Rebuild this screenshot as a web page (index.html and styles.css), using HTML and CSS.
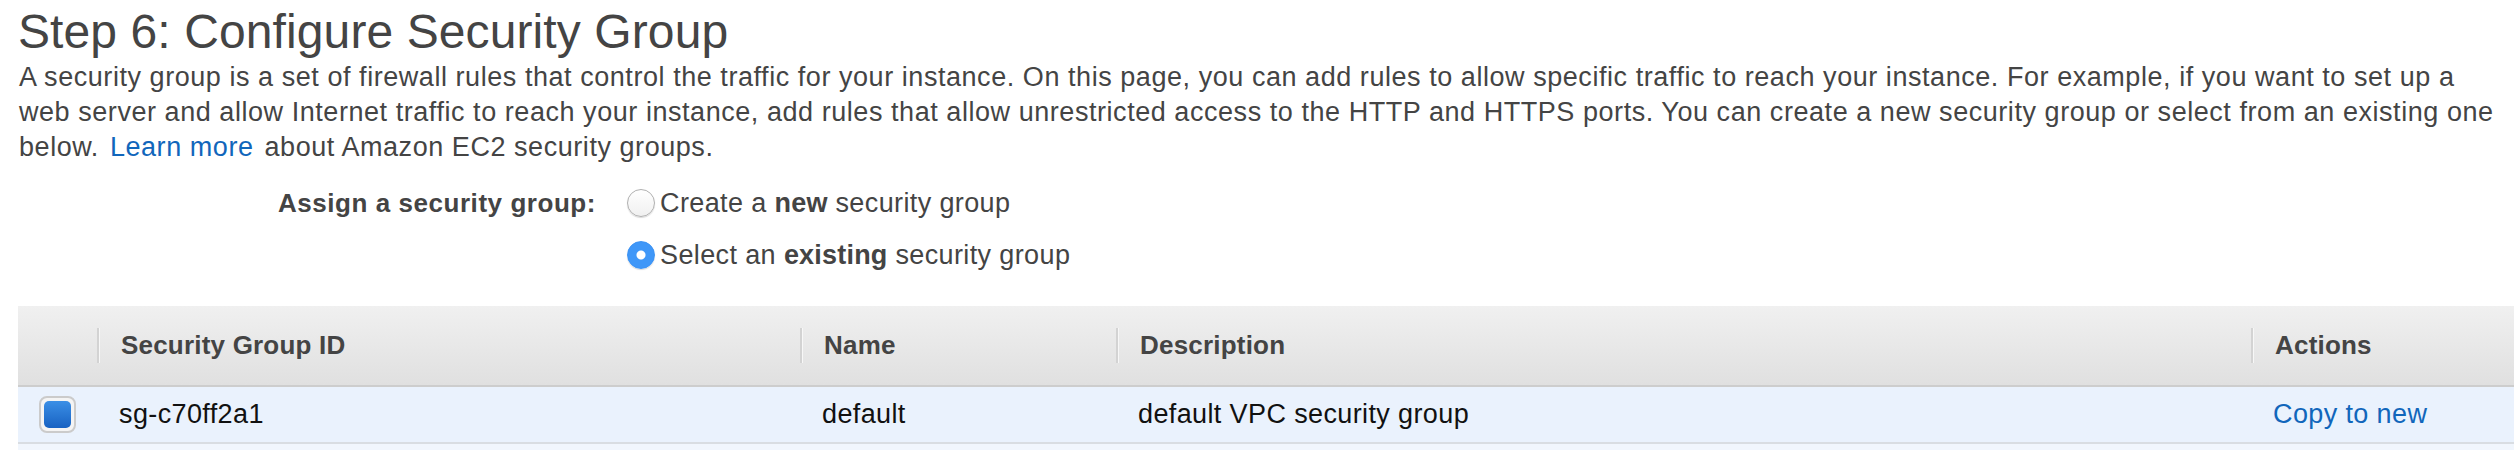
FILE: index.html
```html
<!DOCTYPE html>
<html>
<head>
<meta charset="utf-8">
<link rel="stylesheet" href="styles.css">
</head>
<body>
<div class="page">
  <h1 class="title">Step 6: Configure Security Group</h1>
  <p class="intro">A security group is a set of firewall rules that control the traffic for your instance. On this page, you can add rules to allow specific traffic to reach your instance. For example, if you want to set up a<br>web server and allow Internet traffic to reach your instance, add rules that allow unrestricted access to the HTTP and HTTPS ports. You can create a new security group or select from an existing one<br>below. <a class="link" href="#">Learn more</a> about Amazon EC2 security groups.</p>

  <div class="assign">
    <div class="assign-label">Assign a security group:</div>
    <div class="options">
      <label class="option"><span class="radio"></span><span>Create a <b>new</b> security group</span></label>
      <label class="option"><span class="radio checked"></span><span>Select an <b>existing</b> security group</span></label>
    </div>
  </div>

  <div class="table">
    <div class="thead">
      <div class="cell c1"></div>
      <div class="cell c2"><span class="sep"></span>Security Group ID</div>
      <div class="cell c3"><span class="sep"></span>Name</div>
      <div class="cell c4"><span class="sep"></span>Description</div>
      <div class="cell c5"><span class="sep"></span>Actions</div>
    </div>
    <div class="trow">
      <div class="cell c1"><span class="check"><span class="check-inner"></span></span></div>
      <div class="cell c2">sg-c70ff2a1</div>
      <div class="cell c3">default</div>
      <div class="cell c4">default VPC security group</div>
      <div class="cell c5"><a class="link" href="#">Copy to new</a></div>
    </div>
    <div class="trow-next"></div>
  </div>
</div>
</body>
</html>
```

FILE: styles.css
```css
html, body {
  margin: 0;
  padding: 0;
  background: #ffffff;
}
body {
  font-family: "Liberation Sans", Arial, Helvetica, sans-serif;
  color: #444444;
  overflow: hidden;
}
.page {
  padding: 4px 0 0 18px;
}
.title {
  margin: 0;
  font-size: 48px;
  font-weight: normal;
  line-height: 56px;
  color: #444444;
  letter-spacing: 0.1px;
}
.intro {
  margin: 0;
  padding-left: 1px;
  font-size: 27px;
  letter-spacing: 0.55px;
  line-height: 35px;
  color: #444444;
  white-space: nowrap;
}
.link {
  color: #1166bb;
  text-decoration: none;
}
.intro .link {
  margin: 0 3px;
}
.assign {
  display: flex;
  margin-top: 12px;
  font-size: 27px;
  letter-spacing: 0.38px;
}
.assign-label {
  width: 578px;
  height: 52px;
  display: flex;
  align-items: center;
  justify-content: flex-end;
  font-weight: bold;
  font-size: 26px;
  letter-spacing: 0.55px;
  color: #444444;
}
.options {
  margin-left: 31px;
  display: flex;
  flex-direction: column;
}
.option {
  height: 52px;
  display: flex;
  align-items: center;
  gap: 5px;
  color: #444444;
}
.option b {
  letter-spacing: 0.2px;
}
.radio {
  width: 26px;
  height: 26px;
  border-radius: 50%;
  border: 1px solid #b0b0b0;
  background: linear-gradient(#ffffff, #f0f0f0);
  box-shadow: 0 1px 1px rgba(0,0,0,0.15);
  flex: none;
}
.radio.checked {
  border-color: #3b92f4;
  background: radial-gradient(circle, #ffffff 0, #ffffff 4px, #3f97f8 5px);
}
.table {
  margin-top: 25px;
  font-size: 27px;
  letter-spacing: 0.38px;
}
.thead {
  display: flex;
  height: 79px;
  background: linear-gradient(#f0f0f0, #e0e0e0);
  border-bottom: 2px solid #cdcdcd;
  font-weight: bold;
  font-size: 26px;
  letter-spacing: 0.2px;
  color: #444444;
}
.trow {
  display: flex;
  height: 55px;
  background: #eaf2fd;
  border-bottom: 2px solid #d9dde2;
  color: #111111;
}
.trow-next {
  height: 12px;
  background: #f1f6fd;
}
.cell {
  display: flex;
  align-items: center;
  position: relative;
  box-sizing: border-box;
}
.thead .cell {
  padding-left: 24px;
}
.trow .cell {
  padding-left: 22px;
}
.c1 { width: 79px; padding-left: 0 !important; justify-content: center; }
.c2 { width: 703px; }
.c3 { width: 316px; }
.c4 { width: 1135px; }
.c5 { flex: 1; }
.sep {
  position: absolute;
  left: 0;
  top: 22px;
  height: 35px;
  width: 2px;
  background: #d3d3d3;
  border-right: 1px solid #f7f7f7;
}
.check {
  width: 37px;
  height: 37px;
  box-sizing: border-box;
  border: 2px solid #cbcbcb;
  border-radius: 8px;
  background: #f4f4f4;
  display: flex;
  align-items: center;
  justify-content: center;
}
.check-inner {
  width: 27px;
  height: 27px;
  border-radius: 5px;
  background: linear-gradient(#3b8fe6, #1862c2);
}
```
